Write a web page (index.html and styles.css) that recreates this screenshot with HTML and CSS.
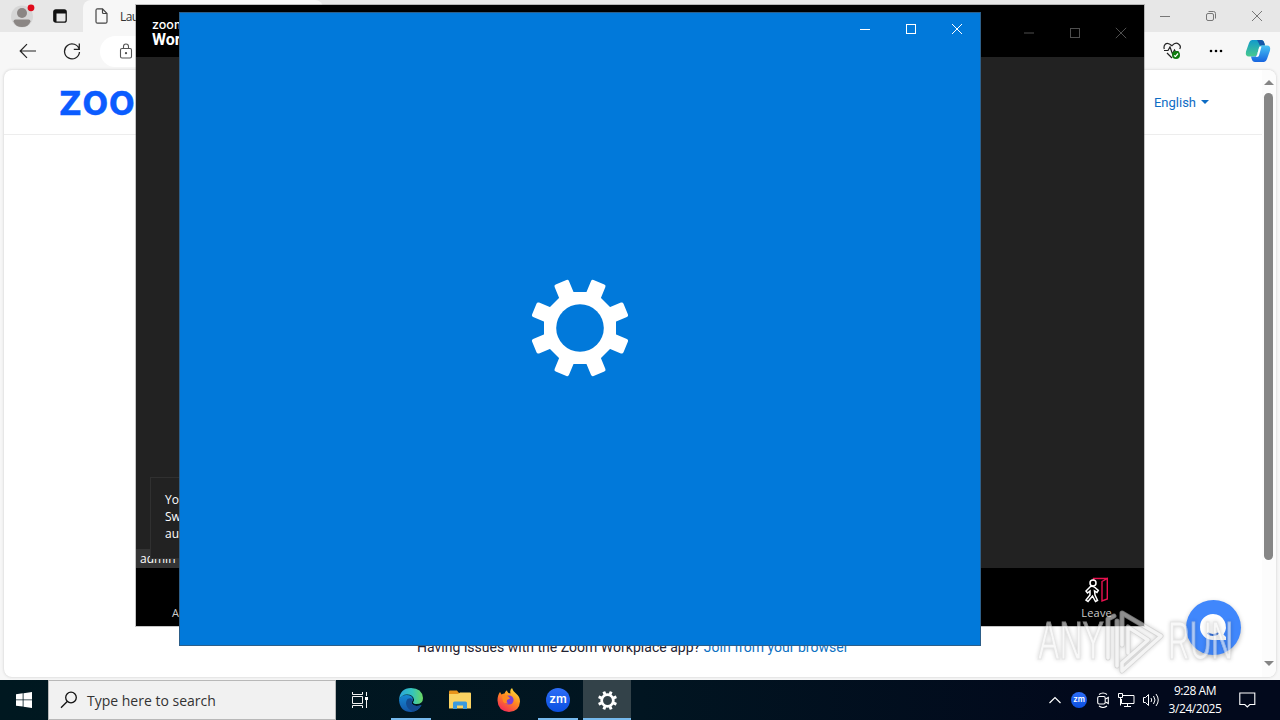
FILE: index.html
```
<!DOCTYPE html>
<html lang="en">

<head>
    <meta charset="utf-8">
    <title>Desktop</title>
    <link rel="stylesheet" href="styles.css">
</head>

<body>
    <div class="desktop">
        <!-- browser -->
        <div class="browser">
            <div class="tabstrip">
                <svg class="profile" width="24" height="24" viewBox="0 0 24 24">
                    <circle cx="11" cy="12.500" r="11" fill="#d6d6d6" />
                    <circle cx="11" cy="9" r="5" fill="#8b8684" />
                    <path d="M2.500 17.500q0-2 2-2h13q2 0 2 2q-2 5.500-8.500 5.500t-8.500-5.500z" fill="#8b8684" />
                    <circle cx="20" cy="3.800" r="3.400" fill="#e00b1c" />
                </svg>
                <svg class="tabmenu" width="14" height="14" viewBox="0 0 14 14">
                    <rect x="0.800" y="0.800" width="12.400" height="12.400" rx="2" fill="none" stroke="#111" stroke-width="1.300" />
                    <path d="M1 1h12v3.500H1zM1 4h2.500v9H1z" fill="#111" />
                </svg>
                <div class="tab">
                    <svg width="14" height="16" viewBox="0 0 14 16" fill="none" stroke="#444" stroke-width="1.200">
                        <path d="M2.500.8h5l4.500 4.700v8.200q0 1.500-1.500 1.500h-8q-1.500 0-1.500-1.500v-11.400q0-1.500 1.500-1.500zM7.500.8v3.700q0 1 1 1h3.500" />
                    </svg>
                    <span>Lau</span>
                </div>
                <div class="winbtns">
                    <svg width="12" height="12" stroke="#777"><path d="M1 6.500h10" /></svg>
                    <svg width="12" height="12" fill="none" stroke="#777">
                        <rect x="1.500" y="3.500" width="7" height="7" rx="1.500" />
                        <path d="M3.500 1.500h5q2 0 2 2v5" />
                    </svg>
                    <svg width="12" height="12" stroke="#777"><path d="M1 1l10 10M11 1L1 11" /></svg>
                </div>
            </div>
            <div class="toolbar">
                <svg class="back" width="18" height="16" viewBox="0 0 18 16" fill="none" stroke="#222" stroke-width="1.200">
                    <path d="M17 8H1.500M8 1.200L1.200 8 8 14.800" />
                </svg>
                <svg class="reload" width="18" height="18" viewBox="0 0 18 18" fill="none" stroke="#222" stroke-width="1.300">
                    <path d="M16.300 7.500A7.500 7.500 0 1 0 16.500 10M16.300 1.500v5.800h-5.500" />
                </svg>
                <div class="address">
                    <svg width="14" height="17" viewBox="0 0 14 17" fill="none" stroke="#555" stroke-width="1.100">
                        <rect x="1.500" y="5.500" width="11" height="9.500" rx="1.500" />
                        <path d="M4.500 5.500V3.500a2.500 2.500 0 0 1 5 0v2" />
                        <circle cx="7" cy="10.200" r=".6" fill="#555" />
                    </svg>
                </div>
                <svg class="health" width="18" height="18" viewBox="0 0 18 18" fill="none" stroke="#222" stroke-width="1.200">
                    <path d="M1.300 7Q.3 4 2.500 2t6.500 1.700Q12.500-.2 15.500 2t1.200 5M1 8.500h4L7 5l2.500 7L11.500 8l1 1.500h3M4 11l5 5" />
                    <circle cx="13" cy="13" r="4" fill="#107c10" stroke="none" />
                    <path d="M11 13.500l1.500 1 2.500-3" stroke="#fff" />
                </svg>
                <svg class="dots" width="14" height="4"><circle cx="2" cy="2" r="1.300" /><circle cx="7" cy="2" r="1.300" /><circle cx="12" cy="2" r="1.300" /></svg>
                <svg class="copilot" width="26" height="24" viewBox="0 0 26 24">
                    <defs>
                        <linearGradient id="cpa" x1="0" y1="0" x2="0" y2="1"><stop offset="0" stop-color="#119acb" /><stop offset="1" stop-color="#48c98e" /></linearGradient>
                        <linearGradient id="cpb" x1="0" y1="0" x2="0" y2="1"><stop offset="0" stop-color="#46c4f4" /><stop offset="1" stop-color="#1764df" /></linearGradient>
                    </defs>
                    <path d="M7 1h9q2.500 0 3.300 3l.7 2.500h-3q-2 0-3 3l-2 6q-.7 2-2.500 2H4q-4 0-3-5L4 4q1-3 3-3z" fill="url(#cpa)" />
                    <path d="M12 1h4q2.500 0 3.300 3l.7 2.500h-4q-2 0-2-2z" fill="#1557a8" />
                    <path d="M19 23h-9q-2.500 0-3.300-3L6 17.500h3.500q2 0 3-3l2-6q.7-2 2.500-2h5q4 0 3 5L22 20q-1 3-3 3z" fill="url(#cpb)" />
                    <path d="M14.500 7.500h2L14 16.500q-.5 1.500-2.500 1.500h-1q1.200-.8 1.700-2.500l1.300-5q.4-2 1-3z" fill="#fff" />
                </svg>
            </div>
            <div class="page">
                <div class="page-main">
                    <div class="page-head">
                        <div class="logo">
                            <svg width="110" height="40" viewBox="0 0 110 40"><text x="-1" y="33" textLength="77" lengthAdjust="spacingAndGlyphs">zoo</text></svg>
                        </div>
                        <div class="lang">English <i></i></div>
                    </div>
                    <p class="issues">Having issues with the Zoom Workplace app? <a>Join from your browser</a></p>
                </div>
                <div class="scrollbar">
                    <i class="up"></i>
                    <div class="thumb"></div>
                    <i class="down"></i>
                </div>
            </div>
        </div>

        <div class="chat">
            <svg width="54" height="54" viewBox="0 0 54 54">
                <path d="M27 14a13 13 0 1 0 0 26h13v-3l-2.500-2.500A13 13 0 0 0 27 14z" fill="#fff" />
                <path d="M21.500 33q5.500 4 11 0" fill="none" stroke="#356fd8" stroke-width="2" />
            </svg>
        </div>

        <!-- zoom meeting -->
        <div class="meeting">
            <div class="meeting-head">
                <div class="brand"><span>zoom</span><b>Workplace</b></div>
                <div class="winbtns dark">
                    <svg width="12" height="12"><path d="M1 6h10" /></svg>
                    <svg width="12" height="12"><rect x="1.500" y="1.500" width="9" height="9" fill="none" /></svg>
                    <svg width="12" height="12"><path d="M.8.8l10.400 10.400M11.200.8L.8 11.200" /></svg>
                </div>
            </div>
            <div class="meeting-body">
                <div class="name">admin</div>
                <div class="toast">Yo<br>Sw<br>au</div>
            </div>
            <div class="meeting-foot">
                <span class="audio">A</span>
                <div class="leave">
                    <svg width="26" height="26" viewBox="0 0 26 26" fill="none">
                        <path d="M9.500 4V1.500H23M18 4.500l5.300-3v20.500L18 24zM18 24V4.500" stroke="#e8114f" stroke-width="1.400" />
                        <g stroke="#fff" stroke-width="1.500">
                            <circle cx="9" cy="6" r="3" />
                            <path d="M6.500 9.500L2 14l1.500 2L6 14v4l-4 5 2 1.500 4.500-5.500 3 5.500 2-1-2.500-5.500-.5-4 2.500 1.500 1.300-2-3.300-3Q8.500 8.500 6.500 9.500z" />
                        </g>
                    </svg>
                    <span>Leave</span>
                </div>
            </div>
        </div>

        <!-- settings splash -->
        <div class="settings">
            <div class="winbtns light">
                <svg width="12" height="12"><path d="M1 6.500h10" /></svg>
                <svg width="12" height="12"><rect x="1.500" y="1.500" width="9" height="9" fill="none" /></svg>
                <svg width="12" height="12"><path d="M1 1l10 10M11 1L1 11" /></svg>
            </div>
            <svg class="gear" width="98" height="98" viewBox="-49 -49 98 98">
                <defs>
                    <g id="teeth">
                        <rect id="tooth" x="-7.800" y="-49.500" width="15.600" height="22" rx="2" transform="rotate(22.500)" />
                        <use href="#tooth" transform="rotate(45)" />
                        <use href="#tooth" transform="rotate(90)" />
                        <use href="#tooth" transform="rotate(135)" />
                        <use href="#tooth" transform="rotate(180)" />
                        <use href="#tooth" transform="rotate(225)" />
                        <use href="#tooth" transform="rotate(270)" />
                        <use href="#tooth" transform="rotate(315)" />
                    </g>
                </defs>
                <use href="#teeth" fill="#fff" />
                <path d="M-15-36h30L36-15v30L15 36h-30L-36 15v-30z" fill="#fff" />
                <circle r="23.800" fill="#0179da" />
            </svg>
        </div>

        <svg class="watermark" width="204" height="74" viewBox="0 0 204 74">
            <g class="wm-text">
                <text x="4" y="54" textLength="66" lengthAdjust="spacingAndGlyphs">ANY</text>
                <text x="134" y="54" textLength="65" lengthAdjust="spacingAndGlyphs">RUN</text>
            </g>
            <g fill="none" stroke-linejoin="round" stroke-linecap="round">
                <path class="wm-edge" d="M74 53V14l6-3M83 16v45M88 40V8l39 23L88 66v-8l26-23-20-13v26" />
                <path class="wm-line" d="M74 53V14l6-3M83 16v45M88 40V8l39 23L88 66v-8l26-23-20-13v26" />
            </g>
        </svg>

        <div class="taskbar">
            <div class="start">
                <svg width="16" height="16" fill="#fff"><path d="M0 2.300L6.700 1.300V7.500H0zM7.500 1.200L16 0v7.500H7.500zM0 8.300h6.700v6.300L0 13.700zM7.500 8.300H16V16l-8.500-1.200z" /></svg>
            </div>
            <div class="search">
                <svg width="18" height="18" fill="none" stroke="#111" stroke-width="1.300"><circle cx="11" cy="6.500" r="5.300" /><path d="M7.200 10.500L1 16.800" /></svg>
                <span>Type here to search</span>
            </div>
            <div class="apps">
                <div class="app">
                    <svg width="16" height="16" fill="none" stroke="#f2f2f2"><path d="M.5 0v2.500h10V0M.5 16v-2.500h10V16M.5 4.500h10v7H.5zM14.500 0v4M14.500 8v8" /><path d="M13 5h3v3h-3z" fill="#fff" stroke="none" /></svg>
                </div>
                <div class="app open">
                    <svg width="24" height="24" viewBox="0 0 24 24">
                        <defs>
                            <linearGradient id="ea"><stop offset="0" stop-color="#2aa4dc" /><stop offset=".55" stop-color="#34c4bd" /><stop offset="1" stop-color="#6bd860" /></linearGradient>
                            <linearGradient id="eb" x1="0" y1="0" x2="0" y2="1"><stop offset="0" stop-color="#1588d2" /><stop offset="1" stop-color="#1456a8" /></linearGradient>
                        </defs>
                        <path d="M0 12Q2 7 7.500 7q6.500 0 6.500 5-2 2-1 4 3 3.500 9.500 1-3.500 7-10.500 7Q1 24 0 12z" fill="url(#eb)" />
                        <path d="M0 12Q1 0 12 0t12 10q0 6-6.500 6-3.500 0-3.500-1.800 1.200-1.200 1-2.700Q14 6.500 8 6.500 2.500 6.500 0 12z" fill="url(#ea)" />
                        <path d="M8.500 11Q5.500 15 8.500 19.500 11 23 15 23.200q5-1.200 7.500-6.200-6.500 2.500-9.500-1-1-2 1-4Q12.500 9 8.500 11z" fill="#134b91" />
                    </svg>
                </div>
                <div class="app">
                    <svg width="22" height="20" viewBox="0 0 22 20">
                        <path d="M0 1.500Q0 .5 1 .5h7l2 2.500v3H0z" fill="#e8941a" />
                        <path d="M0 4h9l2-1.500h10q1 0 1 1V18.500H0z" fill="#fbd362" />
                        <path d="M4 19v-6q0-1.500 1.500-1.500h11q1.500 0 1.500 1.500v6h-4v-3.500H8V19z" fill="#3a9ade" />
                    </svg>
                </div>
                <div class="app">
                    <svg width="24" height="24" viewBox="0 0 24 24">
                        <defs><linearGradient id="ff" x1=".8" y1="0" x2=".2" y2="1"><stop offset="0" stop-color="#ffe43c" /><stop offset=".45" stop-color="#ff8a1f" /><stop offset="1" stop-color="#f3225c" /></linearGradient></defs>
                        <path d="M3 4l1.500 2.500Q6 5.500 7.500 5.500 8 3.500 10 2.200 10 4 11.500 5l2 .5Q12.500 2 15 0q1 3.500 4 5.500 4 3 4 8Q22.500 23.500 12 24 .8 23 .5 12.500.5 7 3 4z" fill="url(#ff)" />
                        <circle cx="12" cy="12" r="4.600" fill="#7a3fd6" />
                        <path d="M5 8.500q4-2 7 .5l1 1.500-3 1.500q-1 2 1 3.500-3.500.5-5-2z" fill="#ff8a1f" />
                    </svg>
                </div>
                <div class="app open"><span class="zm">zm</span></div>
                <div class="app open active">
                    <svg width="19" height="19" viewBox="-49 -49 98 98"><use href="#teeth" fill="#fff" /><circle r="30" fill="none" stroke="#fff" stroke-width="14" /></svg>
                </div>
            </div>
            <div class="tray">
                <svg width="12" height="8" fill="none" stroke="#fff" stroke-width="1.200"><path d="M.5 7L6 1.500 11.500 7" /></svg>
                <span class="zm small">zm</span>
                <svg class="meet" width="12" height="16" fill="none" stroke="#fff" stroke-width="1.100"><rect x=".7" y="4.500" width="7.500" height="7.500" rx="1.500" /><path d="M8.500 7l2.800-1.500v6L8.500 10M2 2.500q4-3 8 0M2 14q4 3 8 0" /></svg>
                <svg width="17" height="14" fill="none" stroke="#fff"><path d="M5 2.500h11v8H3.500V6M9.500 10.500v3M6 13.500h7M.5.5h4v4h-4zM2.500 4.500v8" /></svg>
                <svg width="17" height="14" fill="none" stroke="#fff"><path d="M.5 4.500h2l3-3v11l-3-3h-2zM8 5q1.500 2 0 4M10.500 3q3 4 0 8M13 1q4.500 6 0 12" /></svg>
                <div class="clock">9:28 AM<br>3/24/2025</div>
                <svg class="notify" width="17" height="17" fill="none" stroke="#fff" stroke-width="1.100"><path d="M.8 1h15v11.500h-5L8.300 15l-2.500-2.500h-5z" /></svg>
            </div>
        </div>
    </div>
</body>

</html>
```
FILE: styles.css
```
* {
    box-sizing: border-box;
}

body {
    margin: 0;
    font-family: "Open Sans", "Noto Sans", sans-serif;
}

svg {
    display: block;
    flex: none;
}

.desktop {
    position: relative;
    width: 1280px;
    height: 720px;
    overflow: hidden;
    display: flex;
    flex-direction: column;
}

/* browser */
.browser {
    height: 680px;
    background: #f7f7f7;
    display: flex;
    flex-direction: column;
}

.tabstrip {
    height: 32px;
    background: #e7e7e7;
    display: flex;
    align-items: center;
    flex: none;
}

.profile {
    margin: 0 0 0 11px;
}

.tabmenu {
    margin-left: 18px;
}

.tab {
    width: 240px;
    height: 32px;
    margin-left: 16px;
    padding-left: 12px;
    background: #f7f7f7;
    border-radius: 8px 8px 0 0;
    display: flex;
    align-items: center;
    gap: 11px;
    font-size: 12px;
    letter-spacing: -.6px;
    color: #333;
    white-space: nowrap;
}

.winbtns {
    margin-left: auto;
    display: flex;
    gap: 34px;
}

.tabstrip .winbtns {
    padding-right: 17px;
}

.toolbar {
    height: 38px;
    flex: none;
    display: flex;
    align-items: center;
}

.back {
    margin-left: 19px;
}

.reload {
    margin-left: 26px;
}

.address {
    width: 1040px;
    height: 31px;
    margin-left: 19px;
    padding-left: 19px;
    border-radius: 16px;
    background: #fff;
    display: flex;
    align-items: center;
}

.health {
    margin-left: 23px;
}

.dots {
    margin-left: 28px;
}

.copilot {
    margin-left: 22px;
}

.page {
    width: 1272px;
    height: 607px;
    margin-left: 4px;
    background: #fff;
    border-radius: 8px;
    box-shadow: 0 0 3px #c8c8c8;
    display: flex;
}

.page-main {
    width: 1258px;
    display: flex;
    flex-direction: column;
    justify-content: space-between;
}

.page-head {
    height: 65px;
    border-bottom: 1px solid #ededed;
    display: flex;
    justify-content: space-between;
    align-items: center;
    padding: 0 53px 0 55px;
}

.logo text {
    font: 600 43px Inter, sans-serif;
    fill: #0b5cff;
    stroke: #0b5cff;
    stroke-width: .4px;
}

.lang {
    display: flex;
    align-items: center;
    gap: 5px;
    font: 13px Roboto, sans-serif;
    color: #0e6cc4;
}

.lang i {
    border: 4px solid transparent;
    border-top-color: #0e6cc4;
    border-bottom: 0;
}

.issues {
    margin: 0 0 21px 413px;
    font: 14px/18px Roboto, sans-serif;
    letter-spacing: .02px;
    color: #232333;
    white-space: nowrap;
}

.issues a {
    color: #0e71c2;
}

.scrollbar {
    width: 14px;
    padding: 10px 1px 11px 0;
    background: #fcfcfc;
    border-radius: 0 8px 8px 0;
    display: flex;
    flex-direction: column;
    align-items: center;
}

.scrollbar .up,
.scrollbar .down {
    border: 5px solid transparent;
}

.scrollbar .up {
    border-bottom-color: #858585;
    border-top: 0;
}

.scrollbar .down {
    border-top-color: #858585;
    border-bottom: 0;
    margin-top: auto;
}

.thumb {
    width: 9px;
    height: 467px;
    margin-top: 8px;
    border-radius: 5px;
    background: #868686;
}

.chat {
    position: absolute;
    left: 1186px;
    top: 600px;
    width: 55px;
    height: 55px;
    border-radius: 50%;
    background: #4087fc;
    box-shadow: 0 2px 5px rgba(0, 0, 0, .25);
}

/* meeting window */
.meeting {
    position: absolute;
    left: 136px;
    top: 5px;
    width: 1008px;
    height: 621px;
    background: #222;
    box-shadow: 0 0 0 1px rgba(90, 90, 90, .35);
    display: flex;
    flex-direction: column;
    color: #fff;
}

.meeting-head {
    height: 52px;
    background: #000;
    display: flex;
    align-items: center;
    padding: 4px 17px 0 16px;
}

.brand {
    display: flex;
    flex-direction: column;
}

.brand b {
    font: 700 16px/17px Roboto, sans-serif;
}

.brand span {
    font: 500 12.5px/12px Inter, sans-serif;
}

.dark {
    stroke: #4e4e4e;
}

.meeting-body {
    position: relative;
    height: 511px;
    display: flex;
    align-items: flex-end;
}

.name {
    width: 60px;
    height: 19px;
    padding-left: 4px;
    background: #343434;
    font-size: 12px;
    line-height: 19px;
}

.toast {
    position: absolute;
    left: 14px;
    top: 420px;
    width: 300px;
    height: 82px;
    padding: 13px 14px;
    background: #222;
    border: 1px solid #303030;
    font-size: 12px;
    line-height: 17px;
}

.meeting-foot {
    height: 58px;
    background: #000;
    display: flex;
    justify-content: space-between;
    align-items: flex-end;
    padding: 0 32px 6px 36px;
    font-size: 11px;
    line-height: 15px;
    color: #ccc;
}

.leave {
    display: flex;
    flex-direction: column;
    align-items: center;
    gap: 2px;
    letter-spacing: .2px;
}

/* settings window */
.settings {
    position: absolute;
    left: 179px;
    top: 12px;
    width: 802px;
    height: 634px;
    border: 1px solid #2c5f8a;
    background: #0179da;
    display: flex;
    flex-direction: column;
    align-items: center;
}

.light {
    width: 100%;
    padding: 10px 17px 0 0;
    justify-content: flex-end;
    stroke: #fff;
}

.gear {
    margin-top: 244px;
}

/* watermark */
.watermark {
    position: absolute;
    left: 1034px;
    top: 605px;
    filter: drop-shadow(0 0 2px rgba(0, 0, 0, .3));
    opacity: .6;
}

.wm-text {
    font: 400 53px "Liberation Sans Narrow", "Liberation Sans", sans-serif;
    fill: #f4f4f4;
    stroke: #d4d4d4;
    stroke-width: 1.2px;
}

.wm-edge {
    stroke: #b8b8b8;
    stroke-width: 5px;
}

.wm-line {
    stroke: #ededed;
    stroke-width: 3.5px;
}

/* taskbar */
.taskbar {
    height: 40px;
    background: linear-gradient(90deg, #001820, #011521 50%, #02091c 85%);
    display: flex;
}

.start {
    width: 48px;
    display: flex;
    align-items: center;
    justify-content: center;
}

.search {
    width: 288px;
    background: #f1f1f1;
    border: 1px solid #b8b8b8;
    display: flex;
    align-items: center;
    padding-left: 11px;
    gap: 9px;
    font-size: 14px;
    color: #333;
}

.apps {
    display: flex;
}

.app {
    width: 48px;
    margin-right: 1px;
    display: flex;
    align-items: center;
    justify-content: center;
    position: relative;
}

.app:first-child {
    margin-right: 3px;
}

.open::after {
    content: "";
    position: absolute;
    left: 4px;
    right: 4px;
    bottom: 0;
    height: 2px;
    background: #76b9ed;
}

.active {
    background: #334249;
}

.active::after {
    left: 0;
    right: 0;
}

.zm {
    width: 24px;
    height: 24px;
    border-radius: 50%;
    background: linear-gradient(#2d6df6, #0b4fe0);
    color: #fff;
    font: 600 12px/22px Inter, sans-serif;
    text-align: center;
}

.tray {
    margin-left: auto;
    display: flex;
    align-items: center;
    gap: 8px;
    padding-right: 24px;
}

.small {
    width: 16px;
    height: 16px;
    font-size: 8px;
    line-height: 15px;
    margin-left: 2px;
}

.meet {
    margin: 0 1px 0 2px;
}

.clock {
    width: 54px;
    font-size: 12px;
    line-height: 18px;
    letter-spacing: -.45px;
    color: #fff;
    text-align: center;
    white-space: nowrap;
}

.notify {
    margin-left: 9px;
}
```
